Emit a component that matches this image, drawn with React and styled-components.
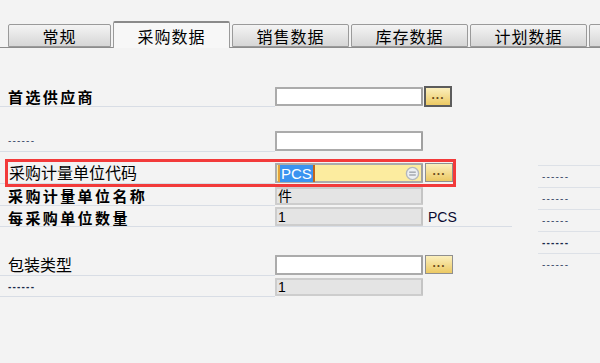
import React from 'react'
import styled, { createGlobalStyle } from 'styled-components'

const GlobalStyle = createGlobalStyle`
    html, body {
        margin: 0;
        padding: 0;
        background: #f3f3f3;
    }
    body {
        font-family: "Noto Sans CJK SC", "Noto Sans", sans-serif;
        color: #000;
    }
`

const tabs = ['常规', '采购数据', '销售数据', '库存数据', '计划数据', '']

export default function App() {
    return (
        <Page>
            <GlobalStyle />
            <TabBar>
                {tabs.map((t, i) => (
                    <Tab key={i} active={i === 1} width={i === 0 ? 103 : i === 5 ? 14 : 117}>{t}</Tab>
                ))}
            </TabBar>

            <Body>
                <LeftCol>
                    <Row top={38} height={21}>
                        <Label bold>首选供应商</Label>
                        <Field />
                        <PickButton focused>...</PickButton>
                    </Row>

                    <Row top={23} height={22}>
                        <Label><Dashes>------</Dashes></Label>
                        <Field />
                    </Row>

                    <Row top={10} height={22} highlighted>
                        <Label inset>采购计量单位代码</Label>
                        <Field active>
                            <Selected>PCS</Selected>
                            <LinkIcon viewBox="0 0 16 16">
                                <circle cx="8" cy="8" r="6.5" fill="#eceff2" stroke="#b4b8bd" strokeWidth="1.5" />
                                <rect x="4.5" y="5.8" width="7" height="1.6" fill="#a6abb1" />
                                <rect x="4.5" y="8.8" width="7" height="1.6" fill="#a6abb1" />
                            </LinkIcon>
                        </Field>
                        <PickButton>...</PickButton>
                    </Row>

                    <Row top={2} height={20}>
                        <Label bold>采购计量单位名称</Label>
                        <Field disabled>件</Field>
                    </Row>

                    <Row top={0} height={21} wideLine>
                        <Label bold nudge={3}>每采购单位数量</Label>
                        <Field disabled>1</Field>
                        <Unit>PCS</Unit>
                    </Row>

                    <Row top={27} height={22}>
                        <Label>包装类型</Label>
                        <Field />
                        <PickButton>...</PickButton>
                    </Row>

                    <Row top={1} height={20}>
                        <Label><Dashes dark>------</Dashes></Label>
                        <Field disabled>1</Field>
                    </Row>
                </LeftCol>

                <RightCol>
                    {[0, 1, 2, 3, 4].map(i => (
                        <SideRow key={i}><Dashes dark={i === 3}>------</Dashes></SideRow>
                    ))}
                </RightCol>
            </Body>
        </Page>
    )
}

const Page = styled.div`
    width: 600px;
    height: 363px;
    overflow: hidden;
    background: #f3f3f3;
`

const TabBar = styled.div`
    display: flex;
    align-items: flex-end;
    gap: 2px;
    height: 48px;
    padding-left: 8px;
    box-sizing: border-box;
    border-bottom: 1px solid #8c8c8c;
`

const Tab = styled.div`
    box-sizing: border-box;
    width: ${p => p.width}px;
    flex-shrink: 0;
    height: ${p => (p.active ? 27 : 23)}px;
    margin-bottom: ${p => (p.active ? -1 : 0)}px;
    display: flex;
    align-items: center;
    justify-content: center;
    font-size: 16px;
    letter-spacing: 1px;
    border: 1px solid #9a9a9a;
    border-bottom: ${p => (p.active ? 'none' : '1px solid #9a9a9a')};
    border-top: ${p => (p.active ? '2px solid #8a8a8a' : '1px solid #9a9a9a')};
    border-radius: 2px 2px 0 0;
    background: ${p => (p.active ? '#f7f7f7' : 'linear-gradient(#f4f4f4, #d6d6d6)')};
    padding-top: ${p => (p.active ? 0 : 1)}px;
`

const Body = styled.div`
    display: flex;
`

const LeftCol = styled.div`
    width: 538px;
    display: flex;
    flex-direction: column;
`

const Row = styled.div`
    position: relative;
    display: flex;
    align-items: stretch;
    height: ${p => p.height}px;
    margin-top: ${p => p.top}px;
    ${p => p.highlighted && `
        &::after {
            content: '';
            position: absolute;
            left: 5px;
            top: -3px;
            width: 451px;
            height: 28px;
            box-sizing: border-box;
            border: 3px solid #f23a3a;
            pointer-events: none;
        }
    `}
    ${p => p.wideLine && `
        &::before {
            content: '';
            position: absolute;
            left: 0;
            bottom: 0;
            width: 512px;
            border-bottom: 1px solid #d8dde5;
        }
    `}
`

const Label = styled.div`
    width: 275px;
    flex-shrink: 0;
    box-sizing: border-box;
    padding-left: ${p => (p.inset ? 9 : 8)}px;
    padding-top: ${p => p.nudge || 0}px;
    display: flex;
    align-items: center;
    font-size: ${p => (p.bold ? 15 : 16)}px;
    font-weight: ${p => (p.bold ? 700 : 400)};
    letter-spacing: ${p => (p.bold ? 2.4 : 0)}px;
    border-bottom: 1px solid #d8dde5;
    white-space: nowrap;
    line-height: 15px;
`

const Field = styled.div`
    width: 148px;
    flex-shrink: 0;
    box-sizing: border-box;
    margin: 1px 0;
    display: flex;
    align-items: center;
    padding-left: 1px;
    font-family: "Liberation Sans", "Noto Sans CJK SC", sans-serif;
    font-size: 14px;
    line-height: 1;
    border: 2px solid ${p => (p.disabled ? '#cdcdcd' : '#ababab')};
    border-right-color: ${p => (p.disabled ? '#c4c4c4' : '#a0a0a0')};
    border-radius: 1px;
    background: ${p => (p.active ? '#fcec9f' : p.disabled ? '#e4e4e4' : '#ffffff')};
    position: relative;
`

const Selected = styled.span`
    background: #3a93f0;
    color: #fff;
    padding: 0 1px;
    height: 17px;
    line-height: 17px;
    border-left: 2px solid #e3a23a;
    border-right: 2px solid #c2651a;
    font-size: 15px;
`

const LinkIcon = styled.svg`
    position: absolute;
    right: 1px;
    top: 1px;
    width: 15px;
    height: 15px;
`

const PickButton = styled.div`
    width: 28px;
    height: ${p => (p.focused ? 21 : 19)}px;
    margin: ${p => (p.focused ? 0 : 1)}px 0 0 ${p => (p.focused ? 1 : 2)}px;
    box-sizing: border-box;
    border: ${p => (p.focused ? '2px solid #5c5c5c' : '1px solid #8f8f8f')};
    background: linear-gradient(#fbefbd, #ecc963);
    display: flex;
    align-items: center;
    justify-content: center;
    font-family: "Liberation Sans", sans-serif;
    font-size: 12px;
    font-weight: 700;
    letter-spacing: 1px;
    color: #6b4a1a;
    line-height: 1;
    padding-bottom: 3px;
`

const Unit = styled.div`
    margin-left: 5px;
    display: flex;
    align-items: center;
    font-family: "Liberation Sans", sans-serif;
    font-size: 14px;
    color: #0a0a30;
`

const Dashes = styled.span`
    font-family: "Liberation Sans", sans-serif;
    font-size: 10px;
    font-weight: ${p => (p.dark ? 700 : 400)};
    letter-spacing: 1.2px;
    color: ${p => (p.dark ? '#1a2a4a' : '#3a4a6a')};
    line-height: 1;
`

const RightCol = styled.div`
    width: 62px;
    padding-top: 117px;
    display: flex;
    flex-direction: column;
`

const SideRow = styled.div`
    height: 22px;
    box-sizing: border-box;
    border-top: 1px solid #dde1e7;
    padding-left: 4px;
    display: flex;
    align-items: center;
`
